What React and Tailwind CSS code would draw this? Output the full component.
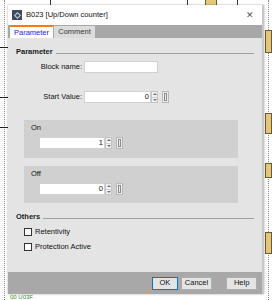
import React from 'react';

const font = { fontFamily: '"Liberation Sans", Arial, sans-serif' };

const Spinner = () => (
  <div className="flex flex-col w-[7px] h-[12px] border border-[#c4c4c4] bg-[#f0f0f0]">
    <div className="flex-1 flex items-center justify-center border-b border-[#d0d0d0]">
      <div className="w-0 h-0 border-l-[2px] border-r-[2px] border-b-[2px] border-l-transparent border-r-transparent border-b-[#707070]" />
    </div>
    <div className="flex-1 flex items-center justify-center">
      <div className="w-0 h-0 border-l-[2px] border-r-[2px] border-t-[2px] border-l-transparent border-r-transparent border-t-[#707070]" />
    </div>
  </div>
);

const LinkBox = () => (
  <div className="ml-[4px] w-[7px] h-[12px] border border-[#b8b8b8] bg-[#ececec] flex items-center justify-center">
    <div className="w-[3px] h-[8px] border border-[#8a8a8a]" />
  </div>
);

const NumField = ({ value, width }) => (
  <div className="flex items-center">
    <div className={`${width} h-[12px] bg-white border border-[#d0d0d0] flex items-center justify-end pr-[1px] text-[7.5px] leading-none text-[#111]`}>{value}</div>
    <Spinner />
    <LinkBox />
  </div>
);

const SectionHeader = ({ title }) => (
  <div className="flex items-center gap-[3px] pr-[8px] h-[8px]">
    <span className="font-bold text-[7.5px] text-[#1a1a1a] leading-none">{title}</span>
    <div className="flex-1 h-[1px] bg-[#a0a0a0] mt-[3px]" />
  </div>
);

const Checkbox = ({ label }) => (
  <div className="flex items-center gap-[3px] h-[8px]">
    <div className="w-[8px] h-[8px] bg-white border border-[#333]" />
    <span className="text-[7.5px] leading-none text-[#111]">{label}</span>
  </div>
);

const Background = () => (
  <div className="absolute inset-0 bg-white">
    {[50, 187, 237].map(x => (
      <div key={x} className="absolute top-0 w-[1px] h-[5px] bg-[#333]" style={{ left: x }} />
    ))}
    <div className="absolute left-[205px] top-0 w-[12px] h-[6px] bg-[#e6c77a] border-x border-b border-[#6a5a30]" />
    {[4, 268].map(x => (
      <div key={x} className="absolute top-0 bottom-0 w-[1px] border-l border-dotted border-[#888]" style={{ left: x }} />
    ))}
    {[47, 97, 127].map(y => (
      <div key={y} className="absolute left-0 w-[8px] h-[1px] bg-[#222]" style={{ top: y }} />
    ))}
    {[[30, 23], [113, 21], [163, 15], [232, 22]].map(([y, h]) => (
      <div key={y} className="absolute left-[265px] w-[7px] bg-[#e6c77a] border border-[#6a5a30]" style={{ top: y, height: h }} />
    ))}
    <div className="absolute left-[10px] top-[294px] text-[6px] leading-none text-[#3a8a3a]">00 U03F</div>
  </div>
);

export default function App() {
  return (
    <div className="relative w-[272px] h-[300px] overflow-hidden" style={font}>
      <Background />
      <div className="absolute left-[8px] top-[5px] w-[256px] h-[289px] flex flex-col border-r-[2px] border-[#c8c8c8] shadow-[0_0_2px_rgba(0,0,0,0.35)]">
        <div className="h-[20px] bg-white flex items-center pl-[4px] pr-[8px]">
          <div className="w-[10px] h-[10px] bg-[#3c4a5e] flex items-center justify-center overflow-hidden">
            <div className="w-[5px] h-[5px] border border-[#c8d4e4] rotate-45" />
          </div>
          <span className="ml-[4px] text-[7.5px] leading-none text-[#111]">B023 [Up/Down counter]</span>
          <span className="ml-auto text-[9px] leading-none text-[#555]">✕</span>
        </div>
        <div className="h-[13px] bg-[#a8a8a8] flex items-end pl-[2px]">
          <div className="h-[13px] w-[43px] bg-white border-t-[2px] border-[#f07d1a] flex items-center justify-center text-[7.5px] leading-none text-[#2222ee]">Parameter</div>
          <div className="h-[12px] ml-[1px] w-[41px] bg-[#dcdcdc] flex items-center justify-center text-[7.5px] leading-none text-[#333]">Comment</div>
        </div>
        <div className="flex-1 bg-[#e4e4e4] flex flex-col pl-[8px] pt-[10px]">
          <SectionHeader title="Parameter" />
          <div className="flex items-center mt-[5px] h-[12px]">
            <span className="w-[66px] text-right text-[7.5px] leading-none text-[#111]">Block name:</span>
            <div className="ml-[2px] w-[74px] h-[12px] bg-white border border-[#d0d0d0]" />
          </div>
          <div className="flex items-center mt-[18px] h-[12px]">
            <span className="w-[66px] text-right text-[7.5px] leading-none text-[#111]">Start Value:</span>
            <div className="ml-[2px]"><NumField value="0" width="w-[67px]" /></div>
          </div>
          <div className="mt-[17px] mr-[24px] ml-[8px] h-[38px] bg-[#d0d0d0] pl-[7px] pt-[4px]">
            <div className="text-[7.5px] leading-none text-[#111] h-[8px]">On</div>
            <div className="ml-[8px] mt-[5px]"><NumField value="1" width="w-[66px]" /></div>
          </div>
          <div className="mt-[8px] mr-[24px] ml-[8px] h-[37px] bg-[#d0d0d0] pl-[7px] pt-[4px]">
            <div className="text-[7.5px] leading-none text-[#111] h-[8px]">Off</div>
            <div className="ml-[8px] mt-[5px]"><NumField value="0" width="w-[66px]" /></div>
          </div>
          <div className="mt-[10px]"><SectionHeader title="Others" /></div>
          <div className="ml-[8px] mt-[7px] flex flex-col gap-[7px]">
            <Checkbox label="Retentivity" />
            <Checkbox label="Protection Active" />
          </div>
        </div>
        <div className="h-[22px] bg-[#a8a8a8] flex items-center pl-[144px] pr-[5px]">
          <button className="w-[26px] h-[13px] bg-[#e4e4e4] border border-[#0078d7] text-[7.5px] leading-none text-[#111]">OK</button>
          <button className="ml-[3px] w-[32px] h-[13px] bg-[#e4e4e4] border border-[#adadad] text-[7.5px] leading-none text-[#111]">Cancel</button>
          <button className="ml-[14px] w-[31px] h-[13px] bg-[#e4e4e4] border border-[#adadad] text-[7.5px] leading-none text-[#111]">Help</button>
        </div>
      </div>
    </div>
  );
}
